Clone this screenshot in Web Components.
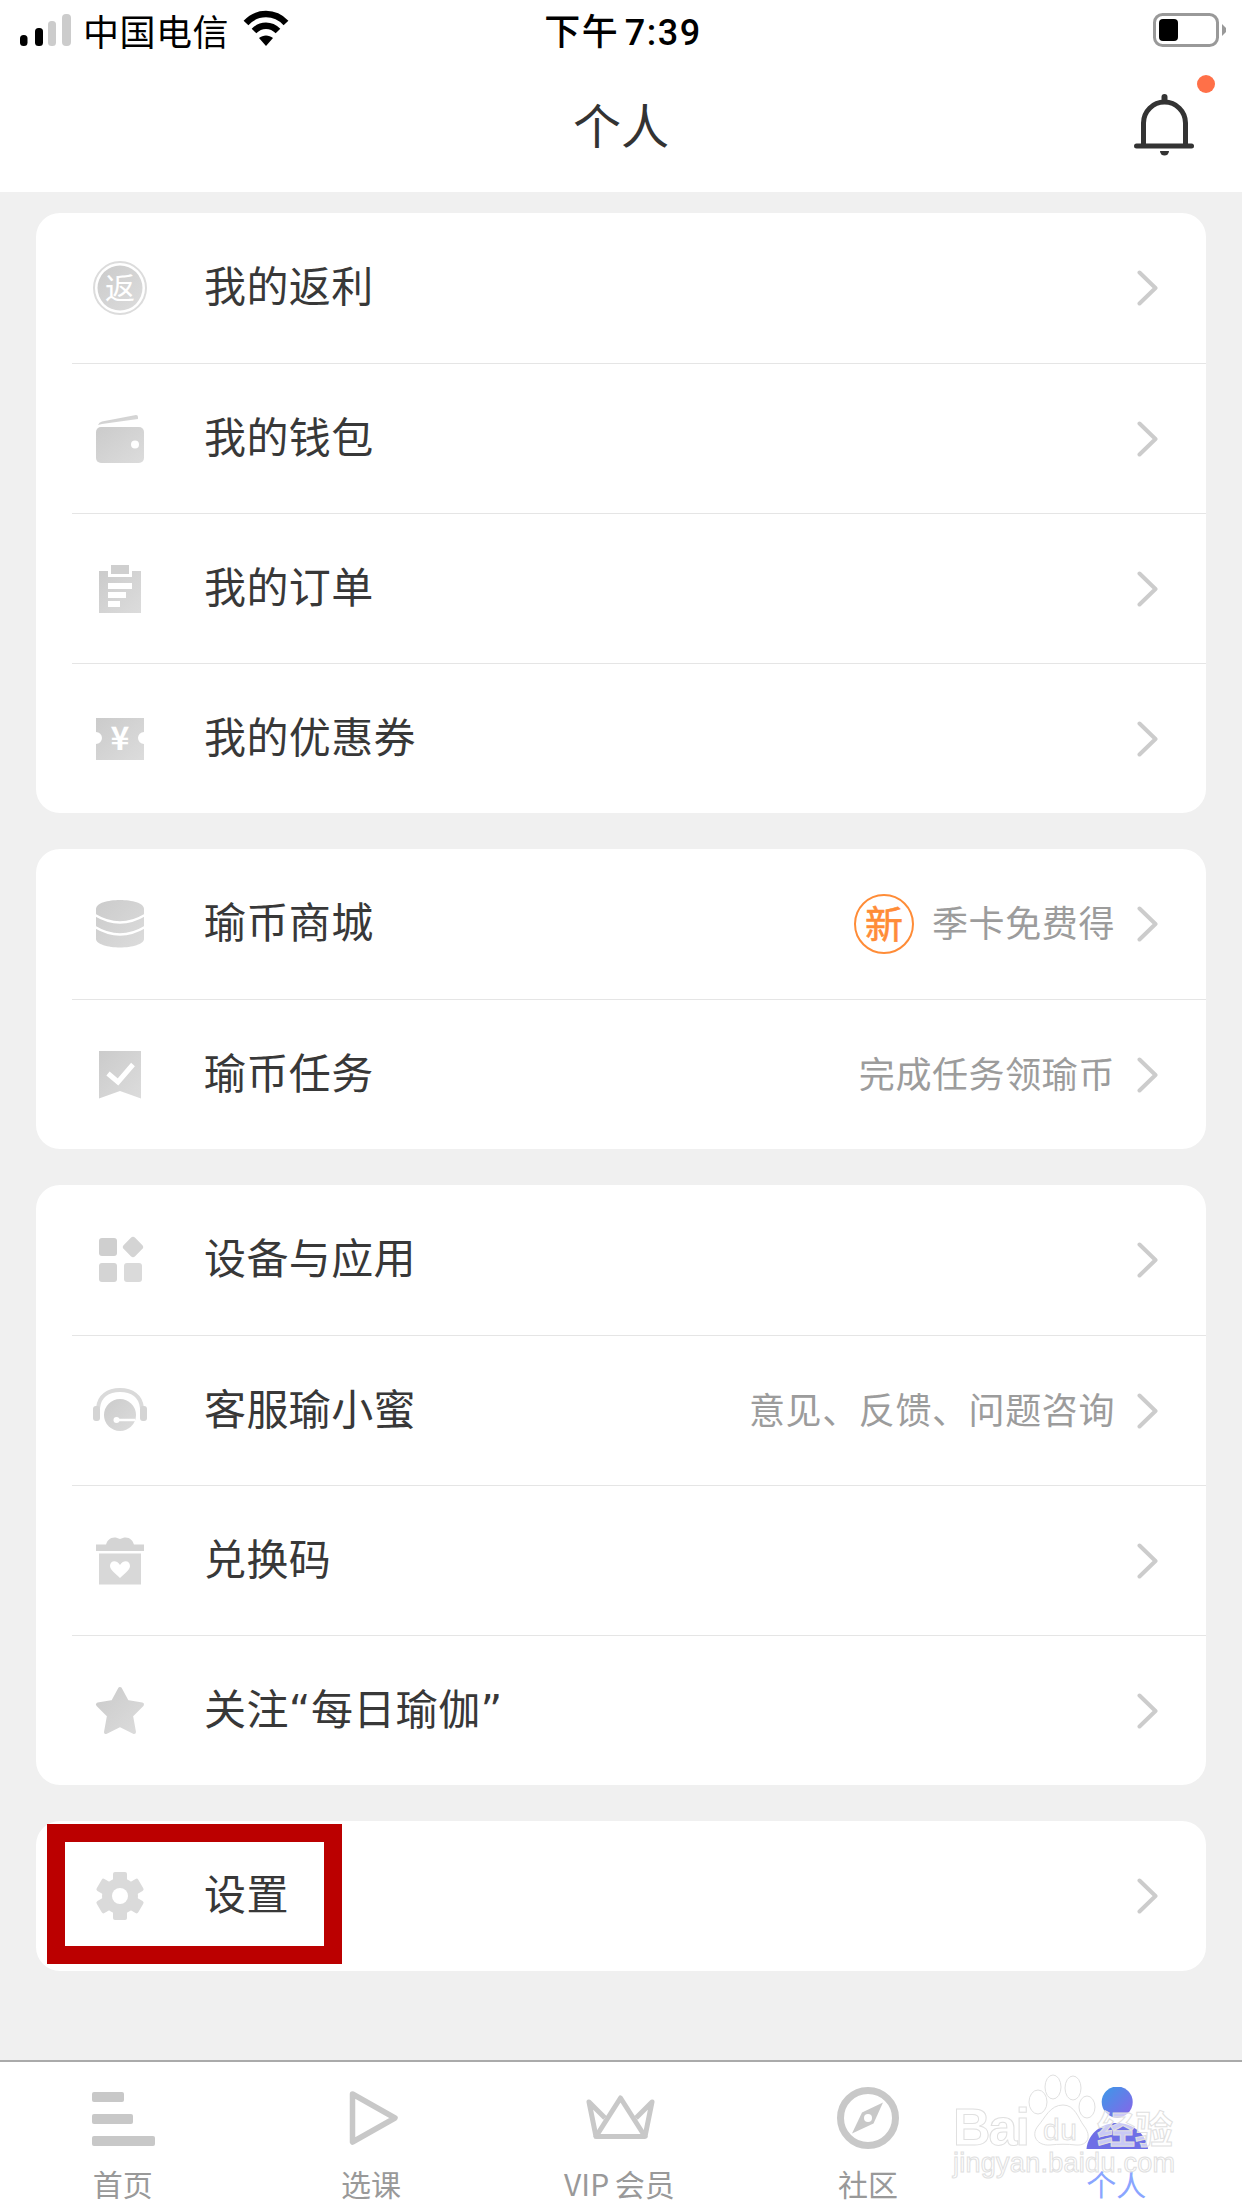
<!DOCTYPE html>
<html lang="zh">
<head>
<meta charset="utf-8" />
<title>个人</title>
<style>
  html, body { margin: 0; padding: 0; }
  body {
    width: 1242px;
    height: 2208px;
    position: relative;
    overflow: hidden;
    display: flex;
    flex-direction: column;
    background: #f0f0f0;
    font-family: "Noto Sans CJK SC", "Noto Sans", sans-serif;
  }
</style>
</head>
<body>
  <status-bar carrier="中国电信" time="下午 7:39"></status-bar>
  <nav-header>个人</nav-header>

  <menu-list>
    <menu-card>
      <menu-row icon="rebate">我的返利</menu-row>
      <menu-row icon="wallet">我的钱包</menu-row>
      <menu-row icon="orders">我的订单</menu-row>
      <menu-row icon="coupon">我的优惠券</menu-row>
    </menu-card>
    <menu-card>
      <menu-row icon="coins" badge="新" sub="季卡免费得">瑜币商城</menu-row>
      <menu-row icon="task" sub="完成任务领瑜币">瑜币任务</menu-row>
    </menu-card>
    <menu-card>
      <menu-row icon="apps">设备与应用</menu-row>
      <menu-row icon="headset" sub="意见、反馈、问题咨询">客服瑜小蜜</menu-row>
      <menu-row icon="gift">兑换码</menu-row>
      <menu-row icon="star">关注“每日瑜伽”</menu-row>
    </menu-card>
    <menu-card>
      <menu-row icon="gear">设置</menu-row>
    </menu-card>
  </menu-list>

  <tab-bar>
    <tab-item icon="home">首页</tab-item>
    <tab-item icon="play">选课</tab-item>
    <tab-item icon="crown">VIP 会员</tab-item>
    <tab-item icon="compass">社区</tab-item>
    <tab-item icon="person" active>个人</tab-item>
  </tab-bar>

  <mark-box></mark-box>
  <baidu-watermark></baidu-watermark>

<script>
// 60x60 icons for the menu rows, all sit centred on the row
const rowIcons = {
  rebate: `
    <circle cx="30" cy="30" r="26" fill="none" stroke="#dcdcdc" stroke-width="2" />
    <circle cx="30" cy="30" r="22.5" fill="url(#g)" />
    <text x="30" y="41" font-size="30" text-anchor="middle" fill="#fff">返</text>`,
  wallet: `
    <path d="M8 16 Q9 13 12 12.5 L46 6 Q48 6 48 8 L48 10 L12 15 Z" fill="url(#g)" />
    <rect x="6" y="18" width="48" height="36" rx="5" fill="url(#g)" />
    <circle cx="45" cy="35.6" r="4" fill="#fff" />`,
  orders: `
    <path d="M9 12 H18 V18 H42 V12 H51 V54 H9 Z M18 24 V30 H42 V24 Z M18 33 V39 H36 V33 Z M18 42 V48 H30 V42 Z"
      fill="url(#g)" fill-rule="evenodd" />
    <rect x="21" y="6" width="18" height="9" fill="#cfcfcf" />`,
  coupon: `
    <path d="M6 9 H54 V23 A6 6 0 0 0 54 35 V51 H6 V35 A6 6 0 0 0 6 23 Z" fill="url(#g)" />
    <text x="30" y="41" font-size="32" font-weight="700" text-anchor="middle" fill="#fff">¥</text>`,
  coins: `
    <path d="M6 15 C6 9 18 6 30 6 C42 6 54 9 54 15 V45 C54 50 42 53.5 30 53.5 C18 53.5 6 50 6 45 Z" fill="url(#g)" />
    <path d="M5 21 Q30 36 55 21 M5 33 Q30 48 55 33" fill="none" stroke="#fff" stroke-width="2.6" />`,
  task: `
    <path d="M9 6 H51 V53.5 L30 46 L9 53.5 Z" fill="url(#g)" />
    <path d="M18 28.5 L28 37 L43 19.5" fill="none" stroke="#fff" stroke-width="5" />`,
  apps: `
    <rect x="9" y="8" width="18" height="18" rx="3" fill="#cfcfcf" />
    <rect x="35" y="9" width="16" height="16" rx="3" fill="#d4d4d4" transform="rotate(45 43 17)" />
    <rect x="9" y="33" width="18" height="19" rx="3" fill="#d4d4d4" />
    <rect x="34" y="33" width="18" height="19" rx="3" fill="#dadada" />`,
  headset: `
    <path d="M8 27 C9 15 18 9 30 9 C42 9 51 15 52 27" fill="none" stroke="#dadada" stroke-width="4" />
    <rect x="3" y="25" width="7" height="15" rx="3" fill="#d4d4d4" />
    <rect x="50" y="25" width="7" height="15" rx="3" fill="#d4d4d4" />
    <circle cx="30" cy="34" r="16" fill="url(#g)" />
    <path d="M26.5 39 H45" stroke="#fff" stroke-width="2.5" fill="none" />
    <circle cx="26.5" cy="39" r="3" fill="#fff" />`,
  gift: `
    <path d="M16 14 C17 8 23 4 30 8 C37 4 43 8 44 14 Z" fill="#d4d4d4" />
    <rect x="6" y="13.5" width="48" height="6.5" fill="#d4d4d4" />
    <path d="M9 22.5 H51 V53.6 H9 Z M30 34 C26 28 20 30 20 35 C20 39 26 43 30 47 C34 43 40 39 40 35 C40 30 34 28 30 34 Z"
      fill="#d8d8d8" fill-rule="evenodd" />`,
  star: `
    <path d="M30 8 L37 21 L52 23.5 L41 34.5 L44 51 L30 44 L16 51 L19 34.5 L8 23.5 L23 21 Z"
      fill="url(#g)" stroke="url(#g)" stroke-width="4" stroke-linejoin="round" />`,
  gear: `
    <g fill="#dadada">
      <circle cx="30" cy="30" r="18" />
      <rect x="23" y="6" width="14" height="12" rx="2" />
      <rect x="23" y="6" width="14" height="12" rx="2" transform="rotate(60 30 30)" />
      <rect x="23" y="6" width="14" height="12" rx="2" transform="rotate(120 30 30)" />
      <rect x="23" y="6" width="14" height="12" rx="2" transform="rotate(180 30 30)" />
      <rect x="23" y="6" width="14" height="12" rx="2" transform="rotate(240 30 30)" />
      <rect x="23" y="6" width="14" height="12" rx="2" transform="rotate(300 30 30)" />
    </g>
    <circle cx="30" cy="30" r="8" fill="#fff" />`,
};

// 80x64 icons for the bottom tabs
const tabIcons = {
  home: `
    <g fill="#c8c8c8">
      <rect x="8" y="5" width="32" height="10" rx="2" />
      <rect x="8" y="27" width="41" height="10" rx="2" />
      <rect x="8" y="49" width="63" height="10" rx="2" />
    </g>`,
  play: `<path d="M19.5 7 L62 31 L19.5 55 Z" fill="none" stroke="#c8c8c8" stroke-width="5.5" stroke-linejoin="round" />`,
  crown: `
    <g fill="none" stroke="#c8c8c8" stroke-width="5" stroke-linejoin="round">
      <path d="M39.5 11 L64 49.5 H15 Z" />
      <path d="M15 49.5 L8 15 L24 31" />
      <path d="M64 49.5 L71 15 L55 31" />
    </g>`,
  compass: `
    <circle cx="39" cy="31" r="27.5" fill="none" stroke="#c8c8c8" stroke-width="7" />
    <path d="M54 15.5 L44.5 36.5 L23 46.5 L33 25.5 Z" fill="#c8c8c8" />
    <circle cx="39" cy="31" r="4" fill="#fff" />`,
  person: `
    <defs>
      <linearGradient id="p" x1="0" y1="0" x2="1" y2="1">
        <stop offset="0" stop-color="#3a9ae8" />
        <stop offset="1" stop-color="#8a63e8" />
      </linearGradient>
    </defs>
    <circle cx="39.2" cy="15" r="15.5" fill="url(#p)" />
    <path d="M8.5 62 C10 46 24 36 39 36 C54 36 68 46 70 62 Z" fill="#6f6fe6" />`,
};

const statusTemplate = document.createElement("template");
statusTemplate.innerHTML = `
  <style>
    :host {
      display: grid;
      grid-template-columns: 1fr auto 1fr;
      grid-template-rows: 60px;
      align-items: center;
      height: 60px;
      padding: 0 16px 0 20px;
      background: #fff;
      color: #000;
      font-size: 36px;
      line-height: 60px;
      font-family: "Noto Sans CJK SC", sans-serif;
    }
    .left { display: flex; align-items: center; gap: 12px; }
    .left span { letter-spacing: 0.5px; }
    .wifi { margin-left: 2px; }
    .right { display: flex; justify-content: flex-end; }
    .time {
      padding-top: 5px;
      font-family: Roboto, "Noto Sans CJK SC", sans-serif;
      font-weight: 500;
      letter-spacing: 1.5px;
      word-spacing: -5px;
    }
    svg { display: block; }
  </style>
  <div class="left">
    <svg width="51" height="60" viewBox="0 0 51 60">
      <rect x="0" y="35" width="7.5" height="11" rx="3.5" fill="#000" />
      <rect x="15" y="28" width="8" height="18" rx="3.5" fill="#000" />
      <rect x="28" y="21" width="8" height="25" rx="3.5" fill="#ccc" />
      <rect x="42" y="14" width="9" height="32" rx="4" fill="#ccc" />
    </svg>
    <span id="carrier"></span>
    <svg class="wifi" width="46" height="60" viewBox="0 0 46 60">
      <path d="M3 23 C14 11 32 11 43 23" fill="none" stroke="#000" stroke-width="6.5" />
      <path d="M11 31 C18 24 28 24 35 31" fill="none" stroke="#000" stroke-width="6.5" />
      <path d="M16 38 C20 34.5 26 34.5 30 38 L23 46 Z" fill="#000" />
    </svg>
  </div>
  <span class="time" id="time"></span>
  <div class="right">
    <svg width="73" height="60" viewBox="0 0 73 60">
      <rect x="1.5" y="14.5" width="63" height="31" rx="8" fill="none" stroke="#999" stroke-width="3" />
      <rect x="6" y="19" width="19" height="22" rx="4" fill="#000" />
      <path d="M69 24 L73 28 V32 L69 36 Z" fill="#999" />
    </svg>
  </div>
`;

class StatusBar extends HTMLElement {
  constructor() {
    super();
    const shadow = this.attachShadow({ mode: "open" });
    shadow.append(statusTemplate.content.cloneNode(true));
    shadow.getElementById("carrier").textContent = this.getAttribute("carrier");
    shadow.getElementById("time").textContent = this.getAttribute("time");
  }
}
customElements.define("status-bar", StatusBar);

const navTemplate = document.createElement("template");
navTemplate.innerHTML = `
  <style>
    :host {
      display: grid;
      grid-template-columns: 1fr auto 1fr;
      align-items: center;
      height: 132px;
      padding: 0 22px;
      background: #fff;
      color: #333;
      font-size: 48px;
    }
    .title { grid-column: 2; padding-bottom: 6px; }
    svg { grid-column: 3; justify-self: end; align-self: start; margin-top: 10px; display: block; }
  </style>
  <div class="title"><slot></slot></div>
  <svg width="90" height="90" viewBox="0 0 90 90">
    <g fill="none" stroke="#333">
      <path d="M13.5 76 V53 A21 21 0 0 1 55.5 53 V76" stroke-width="5" />
      <path d="M34.5 27 V30" stroke-width="6" stroke-linecap="round" />
      <path d="M6.5 76 H61.5" stroke-width="5" stroke-linecap="round" />
    </g>
    <path d="M30 81 H39 A4.5 4.5 0 0 1 30 81 Z" fill="#333" />
    <circle cx="76" cy="14" r="9" fill="#ff7048" />
  </svg>
`;

class NavHeader extends HTMLElement {
  constructor() {
    super();
    this.attachShadow({ mode: "open" }).append(navTemplate.content.cloneNode(true));
  }
}
customElements.define("nav-header", NavHeader);

class MenuList extends HTMLElement {
  constructor() {
    super();
    this.attachShadow({ mode: "open" }).innerHTML = `
      <style>
        :host {
          display: flex;
          flex-direction: column;
          gap: 36px;
          flex: 1;
          padding: 21px 36px 0;
        }
      </style>
      <slot></slot>
    `;
  }
}
customElements.define("menu-list", MenuList);

class MenuCard extends HTMLElement {
  constructor() {
    super();
    this.attachShadow({ mode: "open" }).innerHTML = `
      <style>
        :host {
          display: flex;
          flex-direction: column;
          background: #fff;
          border-radius: 24px;
        }
      </style>
      <slot></slot>
    `;
  }
}
customElements.define("menu-card", MenuCard);

class MenuRow extends HTMLElement {
  constructor() {
    super();
    const shadow = this.attachShadow({ mode: "open" });
    const sub = this.getAttribute("sub");
    const badge = this.getAttribute("badge");
    shadow.innerHTML = `
      <style>
        :host {
          display: flex;
          align-items: center;
          box-sizing: border-box;
          height: 150px;
          padding: 0 48px 0 54px;
          color: #383838;
          font-size: 42px;
        }
        :host(:not(:first-child)) {
          margin-left: 36px;
          padding-left: 18px;
          border-top: 1px solid #e5e5e5;
        }
        .icon { display: block; flex: none; margin-right: 54px; }
        /* DejaVu first only for the narrower curly quotes, Chinese falls through */
        .label {
          flex: 1;
          font-family: "DejaVu Sans", "Noto Sans CJK SC", sans-serif;
          line-height: 60px;
          letter-spacing: 0.4px;
          white-space: nowrap;
        }
        .badge {
          box-sizing: border-box;
          width: 60px;
          height: 60px;
          margin-right: 18px;
          padding-bottom: 4px;
          display: flex;
          align-items: center;
          justify-content: center;
          border: 2px solid #ff8c37;
          border-radius: 50%;
          color: #ff8c37;
          font-size: 38px;
          line-height: 1;
          -webkit-text-stroke: 0.6px #ff8c37;
        }
        .sub {
          margin-right: 22px;
          padding-bottom: 6px;
          color: #9c9c9c;
          font-size: 36px;
          letter-spacing: 0.6px;
          white-space: nowrap;
        }
        .chevron { display: block; flex: none; }
      </style>
      <svg class="icon" width="60" height="60" viewBox="0 0 60 60">
        <defs>
          <linearGradient id="g" x1="0" y1="0" x2="1" y2="1">
            <stop offset="0" stop-color="#cbcbcb" />
            <stop offset="1" stop-color="#dcdcdc" />
          </linearGradient>
        </defs>
        ${rowIcons[this.getAttribute("icon")]}
      </svg>
      <span class="label"><slot></slot></span>
      ${badge ? `<span class="badge">${badge}</span>` : ""}
      ${sub ? `<span class="sub">${sub}</span>` : ""}
      <svg class="chevron" width="21" height="36" viewBox="0 0 21 36">
        <path d="M2.5 2.5 L18.5 18 L2.5 33.5" fill="none" stroke="#ccc" stroke-width="4" stroke-linecap="round" stroke-linejoin="round" />
      </svg>
    `;
  }
}
customElements.define("menu-row", MenuRow);

class TabBar extends HTMLElement {
  constructor() {
    super();
    this.attachShadow({ mode: "open" }).innerHTML = `
      <style>
        :host {
          display: grid;
          grid-template-columns: repeat(5, 1fr);
          box-sizing: border-box;
          height: 148px;
          border-top: 2px solid #aaa;
          background: #fff;
        }
      </style>
      <slot></slot>
    `;
  }
}
customElements.define("tab-bar", TabBar);

class TabItem extends HTMLElement {
  constructor() {
    super();
    this.attachShadow({ mode: "open" }).innerHTML = `
      <style>
        :host {
          display: flex;
          flex-direction: column;
          align-items: center;
          padding-top: 25px;
          color: #999;
          font-size: 30px;
          line-height: 34px;
          word-spacing: -1px;
        }
        :host([active]) { color: #8aa5ff; }
        svg { display: block; margin-bottom: 15px; }
        .label { margin-right: 3px; }
      </style>
      <svg width="80" height="64" viewBox="0 0 80 64">${tabIcons[this.getAttribute("icon")]}</svg>
      <span class="label"><slot></slot></span>
    `;
  }
}
customElements.define("tab-item", TabItem);

// the red annotation frame drawn over the 设置 row
class MarkBox extends HTMLElement {
  constructor() {
    super();
    this.attachShadow({ mode: "open" }).innerHTML = `
      <style>
        :host {
          position: absolute;
          left: 47px;
          top: 1824px;
          box-sizing: border-box;
          width: 295px;
          height: 140px;
          border: 18px solid #bb0000;
        }
      </style>
    `;
  }
}
customElements.define("mark-box", MarkBox);

class BaiduWatermark extends HTMLElement {
  constructor() {
    super();
    this.attachShadow({ mode: "open" }).innerHTML = `
      <style>
        :host { position: absolute; left: 950px; top: 2070px; width: 240px; height: 120px; }
        svg { display: block; }
        text, path, ellipse { fill: rgba(255, 255, 255, 0.65); stroke: #e0e0e0; stroke-width: 1; }
      </style>
      <svg width="240" height="120" viewBox="0 0 240 120">
        <text x="3" y="75" font-family="Liberation Sans, sans-serif" font-weight="700" font-size="52" textLength="77">Bai</text>
        <ellipse cx="88" cy="32" rx="9" ry="12" />
        <ellipse cx="103" cy="17" rx="8" ry="12" />
        <ellipse cx="123" cy="18" rx="8" ry="12" />
        <ellipse cx="137" cy="37" rx="8" ry="11" />
        <path d="M113 35 C125 35 128 48 134 56 C142 66 138 76 126 75 C118 74 108 74 100 75 C88 76 80 66 88 56 C95 48 100 35 113 35 Z" />
        <text x="93" y="70" font-family="Liberation Sans, sans-serif" font-size="30" textLength="34">du</text>
        <text x="147" y="73" font-family="Noto Sans CJK SC, sans-serif" font-weight="700" font-size="38">经验</text>
        <text x="3" y="102" font-family="Liberation Sans, sans-serif" font-size="27" textLength="222">jingyan.baidu.com</text>
      </svg>
    `;
  }
}
customElements.define("baidu-watermark", BaiduWatermark);
</script>
</body>
</html>
